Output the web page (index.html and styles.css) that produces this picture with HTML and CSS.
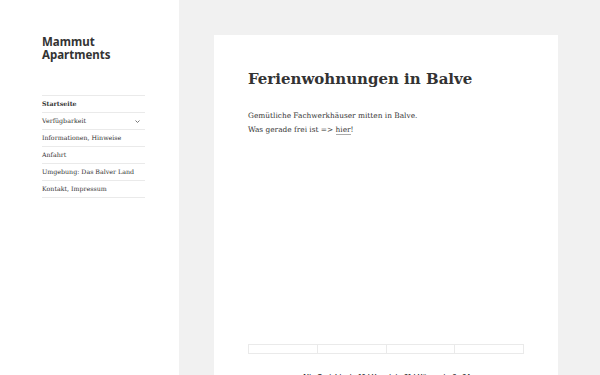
FILE: index.html
```html
<!DOCTYPE html>
<html>

<head>
    <title>Mammut Apartments</title>
    <link rel="stylesheet" href="styles.css">
</head>

<body>
    <div class="page">
        <div class="sidebar">
            <p class="site-title">Mammut Apartments</p>
            <ul class="main-nav">
                <li class="current">Startseite</li>
                <li>Verfügbarkeit
                    <svg class="chevron" width="5" height="3" viewBox="0 0 5 3"><path d="M0.5 0.5 L2.5 2.5 L4.5 0.5" fill="none" stroke="#777" stroke-width="1"/></svg>
                </li>
                <li>Informationen, Hinweise</li>
                <li>Anfahrt</li>
                <li>Umgebung: Das Balver Land</li>
                <li>Kontakt, Impressum</li>
            </ul>
        </div>
        <div class="content">
            <div class="entry">
                <h1>Ferienwohnungen in Balve</h1>
                <p class="intro">Gemütliche Fachwerkhäuser mitten in Balve.<br>Was gerade frei ist =&gt; <a href="#">hier</a>!</p>
                <table class="cal">
                    <tr>
                        <td></td>
                        <td></td>
                        <td></td>
                        <td></td>
                    </tr>
                </table>
                <p class="address">Alte Gerichtsstr. 10 | Hauptstr. 21 | Hönnestraße 34</p>
            </div>
        </div>
    </div>
</body>

</html>
```

FILE: styles.css
```css
body {
    margin: 0;
    padding: 0;
    background-color: #f1f1f1;
    font-family: "DejaVu Serif", serif;
    color: #333;
    height: 375px;
    overflow: hidden;
}

.page {
    display: flex;
    height: 375px;
}

.sidebar {
    width: 137px;
    flex: none;
    background-color: #fff;
    padding: 35px 0 0 42px;
}

.site-title {
    font-family: "Noto Sans", sans-serif;
    font-weight: bold;
    font-size: 11.5px;
    line-height: 13px;
    width: 90px;
    margin: 0 0 34px 0;
    color: #333;
}

.main-nav {
    list-style: none;
    margin: 0;
    padding: 0;
    width: 103px;
    border-top: 1px solid #eaeaea;
}

.main-nav li {
    position: relative;
    font-size: 6.3px;
    line-height: 16px;
    border-bottom: 1px solid #eaeaea;
}

.main-nav .current {
    font-weight: bold;
}

.chevron {
    position: absolute;
    right: 5px;
    top: 7px;
}

.content {
    flex: 1;
    padding: 35px 0 0 35px;
}

.entry {
    width: 310px;
    height: 340px;
    background-color: #fff;
    padding: 0 0 0 34px;
}

h1 {
    margin: 0;
    padding-top: 32px;
    font-size: 15px;
    line-height: 24px;
    font-weight: bold;
}

.intro {
    font-size: 7.4px;
    line-height: 14px;
    margin: 18px 0 0 0;
}

.intro a {
    color: #333;
    text-decoration: none;
    border-bottom: 1px solid #aaa;
}

.cal {
    border-collapse: collapse;
    width: 276px;
    margin-top: 207px;
}

.cal td {
    border: 1px solid #eaeaea;
    height: 8px;
    padding: 0;
}

.address {
    font-family: "Liberation Sans", sans-serif;
    font-weight: bold;
    font-size: 7px;
    text-align: center;
    margin: 19px 0 0 0;
    padding-right: 34px;
}
```
